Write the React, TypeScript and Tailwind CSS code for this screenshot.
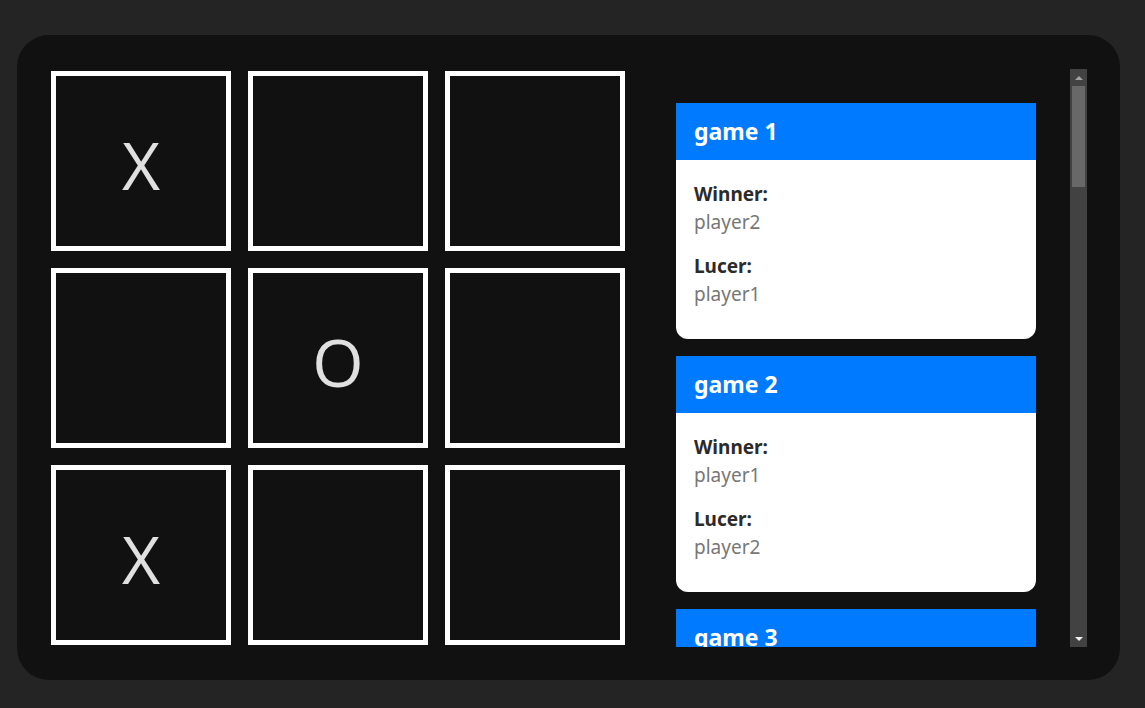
import React from 'react';

type Mark = 'X' | 'O' | '';

const board: Mark[] = ['X', '', '', '', 'O', '', 'X', '', ''];

const games = [
  { id: 1, winner: 'player2', loser: 'player1' },
  { id: 2, winner: 'player1', loser: 'player2' },
  { id: 3, winner: 'player2', loser: 'player1' },
];

function Cell({ mark }: { mark: Mark }) {
  return (
    <div className="w-[180px] h-[180px] border-[5px] border-white bg-[#111111] flex items-center justify-center">
      <span className="text-[#e0e0e0] text-[66px] leading-none pt-[6px] font-['Open_Sans',sans-serif]">
        {mark}
      </span>
    </div>
  );
}

function GameCard({ id, winner, loser }: { id: number; winner: string; loser: string }) {
  return (
    <div className="w-[360px] shrink-0">
      <div className="h-[57px] bg-[#007bff] px-[18px] flex items-center text-white font-bold text-[23px]">
        game {id}
      </div>
      <div className="bg-white rounded-b-[12px] px-[18px] pt-[20px] pb-[31px] text-[19px] leading-[28px]">
        <div className="font-bold text-[#2b2b2b]">Winner:</div>
        <div className="text-[#777777]">{winner}</div>
        <div className="font-bold text-[#2b2b2b] mt-[16px]">Lucer:</div>
        <div className="text-[#777777]">{loser}</div>
      </div>
    </div>
  );
}

export default function App() {
  return (
    <div className="w-[1145px] h-[708px] bg-[#242424] pt-[35px] pl-[17px] font-['Noto_Sans',sans-serif]">
      <div className="w-[1103px] h-[645px] bg-[#111111] rounded-[32px] p-[34px] flex">
        {/* Board */}
        <div className="grid grid-cols-[180px_180px_180px] gap-[17px] mt-[2px] h-fit shrink-0">
          {board.map((m, i) => (
            <Cell key={i} mark={m} />
          ))}
        </div>

        {/* Game history */}
        <div className="ml-[17px] flex h-[578px] shrink-0">
          <div className="w-[428px] overflow-hidden px-[34px] pt-[34px] flex flex-col gap-[17px]">
            {games.map((g) => (
              <GameCard key={g.id} {...g} />
            ))}
          </div>
          <div className="w-[17px] bg-[#424242] flex flex-col items-center">
            <div className="h-[17px] flex items-center justify-center">
              <div className="w-0 h-0 border-l-[4px] border-r-[4px] border-b-[4px] border-l-transparent border-r-transparent border-b-[#a3a3a3]" />
            </div>
            <div className="w-[13px] h-[101px] bg-[#686868]" />
            <div className="flex-1" />
            <div className="h-[17px] flex items-center justify-center">
              <div className="w-0 h-0 border-l-[4px] border-r-[4px] border-t-[4px] border-l-transparent border-r-transparent border-t-[#f0f0f0]" />
            </div>
          </div>
        </div>
      </div>
    </div>
  );
}
